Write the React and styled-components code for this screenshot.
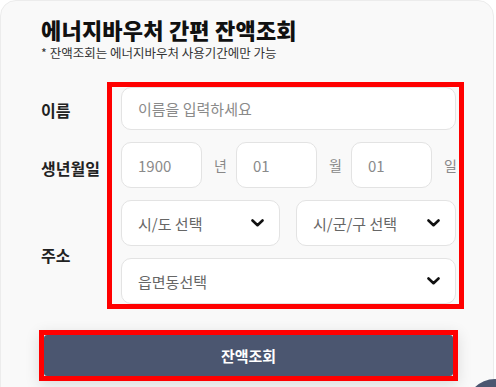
import React from 'react';
import styled, { createGlobalStyle } from 'styled-components';

const GlobalStyle = createGlobalStyle`
    body {
        margin: 0;
        background: #ffffff;
        font-family: 'Noto Sans CJK KR', 'Noto Sans', sans-serif;
        overflow: hidden;
    }
`;

const Card = styled.div`
    width: 494px;
    height: 440px;
    box-sizing: border-box;
    border: 1px solid #ececec;
    border-radius: 16px;
    background: #f9f9f9;
    padding: 14px 0 0 38px;
`;

const Title = styled.h1`
    margin: 0 0 0 2px;
    font-size: 22px;
    line-height: 28px;
    font-weight: 800;
    color: #111;
    letter-spacing: 0.2px;
`;

const Notice = styled.p`
    margin: 2px 0 0 2px;
    font-size: 12.5px;
    line-height: 16px;
    color: #333;
`;

const FormRow = styled.div`
    display: flex;
    margin: 21px 0 0 2px;
`;

const LabelColumn = styled.div`
    width: 66px;
    padding-top: 5px;
    display: flex;
    flex-direction: column;
    gap: 12px;
`;

const Label = styled.div`
    height: ${(p) => p.h}px;
    display: flex;
    align-items: center;
    font-size: 16px;
    font-weight: 700;
    color: #222;
`;

const Highlight = styled.div`
    width: 357px;
    height: 227px;
    box-sizing: border-box;
    border: 5px solid #ff0000;
    padding: 0 3px 0 9px;
    display: flex;
    flex-direction: column;
    gap: 12px;
`;

const Input = styled.input`
    width: 100%;
    height: 46px;
    box-sizing: border-box;
    border: 1px solid #e3e3e3;
    border-radius: 10px;
    background: #fff;
    padding: 0 0 0 16px;
    font-family: inherit;
    font-size: 15px;
    color: #333;
    outline: none;
    &::placeholder {
        color: #8a8a8a;
    }
`;

const BirthRow = styled.div`
    display: grid;
    grid-template-columns: 81px 34px 81px 34px 81px 1fr;
    align-items: center;
`;

const Unit = styled.span`
    padding-left: 12px;
    font-size: 14px;
    color: #888;
`;

const SelectRow = styled.div`
    display: grid;
    grid-template-columns: ${(p) => p.cols};
    gap: 16px;
`;

const Select = styled.div`
    height: 46px;
    box-sizing: border-box;
    border: 1px solid #e3e3e3;
    border-radius: 10px;
    background: #fff;
    padding: 0 15px 0 16px;
    display: flex;
    align-items: center;
    justify-content: space-between;
    font-size: 15px;
    color: #666;
`;

const ButtonBox = styled.div`
    width: 419px;
    box-sizing: border-box;
    margin-top: 21px;
    border: 5px solid #ff0000;
    box-shadow: 0 4px 14px rgba(0, 0, 0, 0.12);
`;

const Button = styled.button`
    display: block;
    width: 100%;
    height: 41px;
    border: none;
    border-radius: 3px;
    background: #4b5670;
    color: #fff;
    font-family: inherit;
    font-size: 15px;
    font-weight: 700;
    cursor: pointer;
`;

const FloatingButton = styled.div`
    position: fixed;
    left: 466px;
    top: 379px;
    width: 58px;
    height: 58px;
    border-radius: 50%;
    background: #4b5670;
`;

const Chevron = () => (
    <svg width="13" height="8" viewBox="0 0 13 8" fill="none">
        <path d="M1.5 1.5 L6.5 6.2 L11.5 1.5" stroke="#111" strokeWidth="2.6" strokeLinecap="round" strokeLinejoin="round" />
    </svg>
);

const App = () => {
    return (
        <>
            <GlobalStyle />
            <Card>
                <Title>에너지바우처 간편 잔액조회</Title>
                <Notice>* 잔액조회는 에너지바우처 사용기간에만 가능</Notice>
                <FormRow>
                    <LabelColumn>
                        <Label h={46}>이름</Label>
                        <Label h={46}>생년월일</Label>
                        <Label h={104}>주소</Label>
                    </LabelColumn>
                    <Highlight>
                        <Input type="text" placeholder="이름을 입력하세요" />
                        <BirthRow>
                            <Input type="text" placeholder="1900" />
                            <Unit>년</Unit>
                            <Input type="text" placeholder="01" />
                            <Unit>월</Unit>
                            <Input type="text" placeholder="01" />
                            <Unit>일</Unit>
                        </BirthRow>
                        <SelectRow cols="159px 160px">
                            <Select>
                                시/도 선택
                                <Chevron />
                            </Select>
                            <Select>
                                시/군/구 선택
                                <Chevron />
                            </Select>
                        </SelectRow>
                        <SelectRow cols="1fr">
                            <Select>
                                읍면동선택
                                <Chevron />
                            </Select>
                        </SelectRow>
                    </Highlight>
                </FormRow>
                <ButtonBox>
                    <Button>잔액조회</Button>
                </ButtonBox>
            </Card>
            <FloatingButton />
        </>
    );
};

export default App;
